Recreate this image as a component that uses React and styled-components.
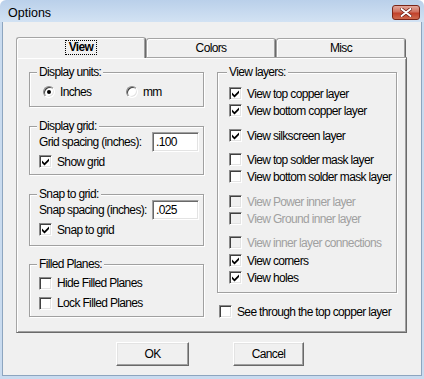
import React from "react";
import styled, { createGlobalStyle } from "styled-components";

const GlobalStyle = createGlobalStyle`
  html, body {
    margin: 0;
    padding: 0;
    background: #ffffff;
  }
  body {
    font-family: "Liberation Sans", Arial, sans-serif;
    font-size: 12px;
    letter-spacing: -0.65px;
    color: #000;
  }
`;

const Window = styled.div`
  width: 424px;
  height: 379px;
  box-sizing: border-box;
  padding: 0 2px 3px 2px;
  display: flex;
  flex-direction: column;
  background: linear-gradient(#bad0ea, #d2e2f3 22px, #c9dbef 22px, #c9dbef);
  border-radius: 6px 6px 0 0;
`;

const TitleBar = styled.div`
  height: 22px;
  box-sizing: border-box;
  padding: 3px 0 0 6px;
  display: flex;
  align-items: center;
  justify-content: space-between;
`;

const Title = styled.div`
  font-size: 12.5px;
  letter-spacing: 0;
  color: #000;
`;

const CloseButton = styled.div`
  width: 28px;
  height: 15px;
  box-sizing: border-box;
  margin-right: 2px;
  border: 1px solid #7a2417;
  border-radius: 3px;
  background: linear-gradient(#e3a99e, #d0705e 45%, #c1412b 55%, #cf6a4e);
  display: flex;
  align-items: center;
  justify-content: center;
`;

const Client = styled.div`
  flex: 1;
  display: flex;
  flex-direction: column;
  background: #f0f0f0;
  border: 1px solid #8da5bf;
  border-top: none;
  padding-top: 15px;
`;

const TabArea = styled.div`
  margin-left: 13px;
  width: 391px;
  display: flex;
  flex-direction: column;
`;

const TabStrip = styled.div`
  display: flex;
  align-items: flex-end;
  height: 20px;
  position: relative;
  z-index: 1;
`;

const Tab = styled.div`
  width: 130px;
  height: ${(p) => (p.$active ? "21px" : "19px")};
  margin-bottom: ${(p) => (p.$active ? "-1px" : "0")};
  box-sizing: border-box;
  background: #f0f0f0;
  border: 1px solid #a5a5a5;
  border-right-color: #6a6a6a;
  border-bottom: none;
  border-radius: 3px 3px 0 0;
  box-shadow: inset 1px 1px 0 #ffffff, inset -1px 0 0 #a0a0a0;
  display: flex;
  align-items: center;
  justify-content: center;
  padding-bottom: ${(p) => (p.$active ? "2px" : "0")};
  font-weight: ${(p) => (p.$active ? "bold" : "normal")};
`;

const FocusLabel = styled.span`
  outline: 1px dotted #000;
  outline-offset: 0;
  padding: 0 3px;
  line-height: 13px;
`;

const Panel = styled.div`
  height: 276px;
  box-sizing: border-box;
  border: 1px solid #a5a5a5;
  border-right-color: #6a6a6a;
  border-bottom-color: #6a6a6a;
  box-shadow: inset 1px 1px 0 #ffffff, inset -1px -1px 0 #a0a0a0;
  padding: 14px 0 0 12px;
  display: grid;
  grid-template-columns: 175px 180px;
  column-gap: 13px;
  align-items: start;
`;

const Column = styled.div`
  display: flex;
  flex-direction: column;
`;

const Group = styled.div`
  height: ${(p) => p.$h}px;
  margin-top: ${(p) => p.$mt || 0}px;
  box-sizing: border-box;
  border: 1px solid #a0a0a0;
  box-shadow: inset 1px 1px 0 #ffffff, 1px 1px 0 #ffffff;
  padding: 0 6px 0 ${(p) => p.$pl || 9}px;
  display: flex;
  flex-direction: column;
`;

const GroupLabel = styled.div`
  align-self: flex-start;
  margin: -8px 0 0 -2px;
  padding: 0 2px;
  line-height: 14px;
  height: 14px;
  background: #f0f0f0;
`;

const Row = styled.div`
  display: flex;
  align-items: center;
  gap: 5px;
  height: ${(p) => p.$h || 17}px;
  margin-top: ${(p) => p.$mt || 0}px;
  margin-left: ${(p) => p.$ml || 0}px;
  color: ${(p) => (p.$disabled ? "#a0a0a0" : "#000")};
  white-space: nowrap;
`;

const Box = styled.div`
  width: 13px;
  height: 13px;
  flex: none;
  box-sizing: border-box;
  border: 1px solid;
  border-color: #8a8a8a #ffffff #ffffff #8a8a8a;
  box-shadow: inset 1px 1px 0 #404040, inset -1px -1px 0 #e3e3e3;
  background: ${(p) => (p.$disabled ? "#f0f0f0" : "#ffffff")};
  display: flex;
  align-items: center;
  justify-content: center;
`;

const RadioCircle = styled.div`
  width: 12px;
  height: 12px;
  flex: none;
  box-sizing: border-box;
  border-radius: 50%;
  border: 1px solid;
  border-color: #8a8a8a #ffffff #ffffff #8a8a8a;
  box-shadow: inset 1px 1px 0 #404040, inset -1px -1px 0 #e3e3e3;
  background: #ffffff;
  display: flex;
  align-items: center;
  justify-content: center;
  &::after {
    content: "";
    width: 4px;
    height: 4px;
    border-radius: 50%;
    background: ${(p) => (p.$on ? "#000" : "transparent")};
  }
`;

const RadioItem = styled.div`
  display: flex;
  align-items: center;
  gap: 5px;
  width: ${(p) => p.$w || "auto"};
`;

const Field = styled.div`
  display: grid;
  grid-template-columns: 113px 47px;
  align-items: center;
  height: 20px;
  margin-top: ${(p) => p.$mt || 0}px;
  white-space: nowrap;
`;

const TextInput = styled.div`
  height: 20px;
  box-sizing: border-box;
  background: #ffffff;
  border: 1px solid;
  border-color: #a0a0a0 #ffffff #ffffff #a0a0a0;
  box-shadow: inset 1px 1px 0 #696969, inset -1px -1px 0 #e3e3e3;
  padding-left: 3px;
  display: flex;
  align-items: center;
`;

const ButtonRow = styled.div`
  display: flex;
  justify-content: center;
  gap: 44px;
  padding-right: 4px;
  margin-top: 9px;
`;

const Button = styled.div`
  width: ${(p) => p.$w}px;
  height: 24px;
  box-sizing: border-box;
  background: #f0f0f0;
  border: 1px solid;
  border-color: #ffffff #696969 #696969 #ffffff;
  box-shadow: inset -1px -1px 0 #a0a0a0, inset 1px 1px 0 #e3e3e3;
  display: flex;
  align-items: center;
  justify-content: center;
`;

const Check = () => (
  <svg width="9" height="9" viewBox="0 0 9 9">
    <path d="M1 3.5 L3.5 6 L8 1.5 L8 4 L3.5 8.5 L1 6 Z" fill="#000" />
  </svg>
);

const CloseX = () => (
  <svg width="12" height="9" viewBox="0 0 12 9">
    <path
      d="M1.5 1 L10.5 8 M10.5 1 L1.5 8"
      stroke="#6b1a10"
      strokeWidth="3.4"
      strokeLinecap="round"
    />
    <path
      d="M1.5 1 L10.5 8 M10.5 1 L1.5 8"
      stroke="#ffffff"
      strokeWidth="2"
      strokeLinecap="round"
    />
  </svg>
);

function CheckRow({ label, on, disabled, mt, ml }) {
  return (
    <Row $mt={mt} $ml={ml} $disabled={disabled}>
      <Box $disabled={disabled}>{on && <Check />}</Box>
      {label}
    </Row>
  );
}

const layers = [
  { label: "View top copper layer", on: true, mt: 6 },
  { label: "View bottom copper layer", on: true },
  { label: "View silkscreen layer", on: true, mt: 8 },
  { label: "View top solder mask layer", mt: 7 },
  { label: "View bottom solder mask layer" },
  { label: "View Power inner layer", disabled: true, mt: 8 },
  { label: "View Ground inner layer", disabled: true },
  { label: "View inner layer connections", disabled: true, mt: 7 },
  { label: "View corners", on: true, mt: 1 },
  { label: "View holes", on: true },
];

export default function App() {
  return (
    <>
      <GlobalStyle />
      <Window>
        <TitleBar>
          <Title>Options</Title>
          <CloseButton>
            <CloseX />
          </CloseButton>
        </TitleBar>
        <Client>
          <TabArea>
            <TabStrip>
              <Tab $active>
                <FocusLabel>View</FocusLabel>
              </Tab>
              <Tab>Colors</Tab>
              <Tab>Misc</Tab>
            </TabStrip>
            <Panel>
              <Column>
                <Group $h={35}>
                  <GroupLabel>Display units:</GroupLabel>
                  <Row $mt={4} $ml={4} $h={17}>
                    <RadioItem $w="78px">
                      <RadioCircle $on />
                      Inches
                    </RadioItem>
                    <RadioItem>
                      <RadioCircle />
                      mm
                    </RadioItem>
                  </Row>
                </Group>
                <Group $h={49} $mt={19}>
                  <GroupLabel>Display grid:</GroupLabel>
                  <Field $mt={-1}>
                    Grid spacing (inches):
                    <TextInput>.100</TextInput>
                  </Field>
                  <CheckRow label="Show grid" on mt={1} />
                </Group>
                <Group $h={52} $mt={19}>
                  <GroupLabel>Snap to grid:</GroupLabel>
                  <Field $mt={-1}>
                    Snap spacing (inches):
                    <TextInput>.025</TextInput>
                  </Field>
                  <CheckRow label="Snap to grid" on mt={1} />
                </Group>
                <Group $h={53} $mt={18}>
                  <GroupLabel>Filled Planes:</GroupLabel>
                  <Row $h={20} $mt={2}>
                    <Box />
                    Hide Filled Planes
                  </Row>
                  <Row $h={20}>
                    <Box />
                    Lock Filled Planes
                  </Row>
                </Group>
              </Column>
              <Column>
                <Group $h={221} $pl={11}>
                  <GroupLabel>View layers:</GroupLabel>
                  {layers.map((l) => (
                    <CheckRow key={l.label} {...l} />
                  ))}
                </Group>
                <CheckRow label="See through the top copper layer" mt={10} ml={2} />
              </Column>
            </Panel>
          </TabArea>
          <ButtonRow>
            <Button $w={73}>OK</Button>
            <Button $w={71}>Cancel</Button>
          </ButtonRow>
        </Client>
      </Window>
    </>
  );
}
